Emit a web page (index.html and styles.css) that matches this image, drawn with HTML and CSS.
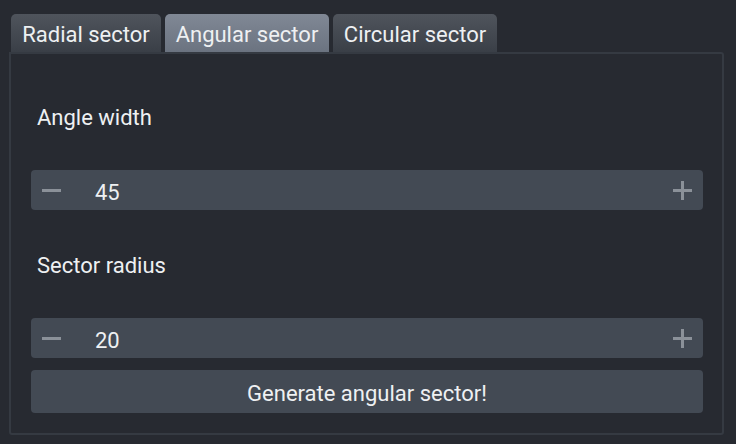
FILE: index.html
```html
<!DOCTYPE html>
<html>
<head>
<meta charset="utf-8">
<link rel="stylesheet" href="styles.css">
</head>
<body>
<div class="app">
  <div class="tabs">
    <div class="tab tab-radial">Radial sector</div>
    <div class="tab tab-angular active">Angular sector</div>
    <div class="tab tab-circular">Circular sector</div>
  </div>
  <div class="panel">
    <div class="label first">Angle width</div>
    <div class="spin">
      <span class="minus"></span>
      <span class="value">45</span>
      <svg class="plus" width="19" height="19" viewBox="0 0 19 19"><rect x="8" y="0" width="3" height="19"/><rect x="0" y="8" width="19" height="3"/></svg>
    </div>
    <div class="label second">Sector radius</div>
    <div class="spin">
      <span class="minus"></span>
      <span class="value">20</span>
      <svg class="plus" width="19" height="19" viewBox="0 0 19 19"><rect x="8" y="0" width="3" height="19"/><rect x="0" y="8" width="19" height="3"/></svg>
    </div>
    <button class="btn">Generate angular sector!</button>
  </div>
</div>
</body>
</html>
```
FILE: styles.css
```css
html, body {
  margin: 0;
  padding: 0;
  background: #272a31;
}
body {
  width: 736px;
  height: 444px;
  overflow: hidden;
  font-family: Roboto, "Liberation Sans", sans-serif;
  font-size: 22px;
  color: #eef0f2;
}
.app {
  padding: 14px 0 0 9px;
  width: 715px;
}
.tabs {
  display: flex;
  gap: 4px;
  margin-left: 2px;
}
.tab {
  height: 38px;
  box-sizing: border-box;
  padding-top: 3px;
  line-height: 35px;
  text-align: center;
  border-radius: 5px 5px 0 0;
  background: linear-gradient(#4f545c, #3a3f47);
  color: #eef0f2;
  white-space: nowrap;
}
.tab-radial { width: 150px; }
.tab-angular { width: 164px; }
.tab-circular { width: 164px; }
.tab.active {
  background: linear-gradient(#808895, #6b7380);
}
.panel {
  box-sizing: border-box;
  height: 383px;
  border: 2px solid #353a42;
  border-radius: 0 3px 3px 3px;
  padding: 0 19px 0 20px;
  display: flex;
  flex-direction: column;
}
.label {
  line-height: 30px;
  padding-left: 6px;
  margin-bottom: 37px;
}
.label.first { margin-top: 49px; }
.label.second { margin-top: 41px; }
.spin {
  height: 40px;
  background: #434a54;
  border-radius: 4px;
  display: flex;
  align-items: center;
  padding: 0 11px;
}
.minus {
  width: 19px;
  height: 3px;
  background: #8b9199;
}
.value {
  margin-left: 34px;
  padding-top: 5px;
  line-height: 35px;
}
.plus {
  margin-left: auto;
  fill: #8b9199;
}
.btn {
  margin-top: 12px;
  height: 43px;
  border: none;
  border-radius: 4px;
  background: #434a54;
  color: #eef0f2;
  font-family: inherit;
  font-size: 22px;
  padding: 5px 0 0 0;
  line-height: 38px;
  text-align: center;
}
```
